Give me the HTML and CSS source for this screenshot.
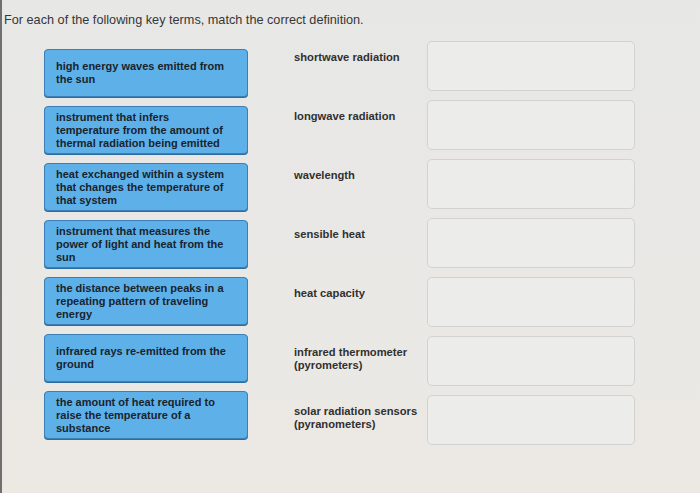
FILE: index.html
```html
<!DOCTYPE html>
<html lang="en">
<head>
<meta charset="utf-8">
<title>Matching</title>
<link rel="stylesheet" href="styles.css">
</head>
<body>
<div class="page">
  <p class="prompt">For each of the following key terms, match the correct definition.</p>
  <div class="match">
    <div class="choices">
      <div class="card">high energy waves emitted from the sun</div>
      <div class="card">instrument that infers temperature from the amount of thermal radiation being emitted</div>
      <div class="card">heat exchanged within a system that changes the temperature of that system</div>
      <div class="card">instrument that measures the power of light and heat from the sun</div>
      <div class="card">the distance between peaks in a repeating pattern of traveling energy</div>
      <div class="card">infrared rays re-emitted from the ground</div>
      <div class="card">the amount of heat required to raise the temperature of a substance</div>
    </div>
    <div class="terms">
      <div class="row"><div class="term">shortwave radiation</div><div class="drop"></div></div>
      <div class="row"><div class="term">longwave radiation</div><div class="drop"></div></div>
      <div class="row"><div class="term">wavelength</div><div class="drop"></div></div>
      <div class="row"><div class="term">sensible heat</div><div class="drop"></div></div>
      <div class="row"><div class="term">heat capacity</div><div class="drop"></div></div>
      <div class="row"><div class="term">infrared thermometer (pyrometers)</div><div class="drop"></div></div>
      <div class="row"><div class="term">solar radiation sensors (pyranometers)</div><div class="drop"></div></div>
    </div>
  </div>
</div>
</body>
</html>
```
FILE: styles.css
```css
html {
  background: #ffffff;
}
body {
  margin: 0;
  font-family: "Liberation Sans", Arial, sans-serif;
}
.page {
  box-sizing: border-box;
  height: 493px;
  border-left: 2px solid #6f6f6f;
  background: linear-gradient(180deg, #e7e7e6 0%, #e9e8e5 55%, #ece9e3 100%);
  padding: 12px 0 0 2px;
}
.prompt {
  margin: 0;
  font-size: 12.7px;
  line-height: 16px;
  color: #363636;
}
.match {
  display: flex;
  align-items: flex-start;
  margin-top: 13px;
}
.choices {
  display: flex;
  flex-direction: column;
  gap: 9px;
  width: 204px;
  margin: 8px 0 0 40px;
}
.card {
  box-sizing: border-box;
  height: 48px;
  display: flex;
  align-items: center;
  padding: 0 15px 0 11px;
  background: #5eb1e8;
  border: 1px solid #3c7fb4;
  border-radius: 4px;
  box-shadow: 0 1px 0 #2f6b9c;
  font-size: 11px;
  font-weight: bold;
  line-height: 13px;
  color: #19232e;
}
.terms {
  display: flex;
  flex-direction: column;
  gap: 9px;
  margin-left: 46px;
}
.row {
  display: flex;
  align-items: flex-start;
}
.term {
  width: 133px;
  padding-top: 10px;
  font-size: 11.2px;
  font-weight: bold;
  line-height: 13px;
  color: #303030;
}
.drop {
  box-sizing: border-box;
  width: 208px;
  height: 50px;
  border: 1px solid #d2d2d1;
  border-radius: 5px;
  background: #ececeb;
}
```
